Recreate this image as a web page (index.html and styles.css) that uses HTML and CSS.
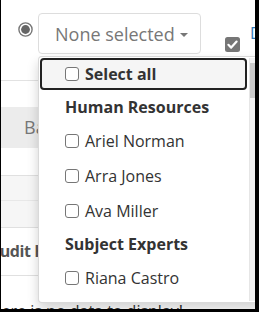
FILE: index.html
```html
<!DOCTYPE html>
<html lang="en">
<head>
    <meta charset="UTF-8">
    <title>Audit filter</title>
    <link rel="stylesheet" href="styles.css">
</head>
<body>
    <div class="frame">
        <div class="toolbar">
            <span class="radio">
                <svg width="15" height="15" viewBox="0 0 15 15"><circle cx="7.5" cy="7.5" r="6.6" fill="#fff" stroke="#777" stroke-width="1.4"/><circle cx="7.5" cy="7.5" r="4.4" fill="#666"/></svg>
            </span>

            <div class="multiselect">
                <button class="ms-button">None selected <span class="caret"></span></button>

                <div class="ms-menu">
                    <ul class="ms-list">
                        <li class="ms-item ms-all"><span class="cb"></span>Select all</li>
                        <li class="ms-group">Human Resources</li>
                        <li class="ms-item"><span class="cb"></span>Ariel Norman</li>
                        <li class="ms-item"><span class="cb"></span>Arra Jones</li>
                        <li class="ms-item"><span class="cb"></span>Ava Miller</li>
                        <li class="ms-group">Subject Experts</li>
                        <li class="ms-item"><span class="cb"></span>Riana Castro</li>
                    </ul>
                    <div class="ms-scroll"><div class="ms-thumb"></div></div>
                </div>
            </div>

            <span class="check-on">
                <svg width="15" height="15" viewBox="0 0 15 15"><rect x="0" y="0" width="15" height="15" rx="2.5" fill="#767676"/><path d="M3.4 7.8 L6.2 10.6 L11.6 4.6" fill="none" stroke="#fff" stroke-width="2.2" stroke-linecap="round" stroke-linejoin="round"/></svg>
            </span>
            <a class="link" href="#">Download</a>
        </div>

        <div class="grid">
            <div class="grid-head">Basic</div>
            <div class="grid-row"></div>
            <div class="grid-row grid-alt"></div>
            <div class="grid-row grid-alt grid-alt-last"></div>
            <div class="grid-title">Audit History</div>
            <div class="grid-empty">There is no data to display!</div>
        </div>
    </div>
</body>
</html>
```

FILE: styles.css
```css
body {
    margin: 0;
    font-family: 'Open Sans', 'Liberation Sans', sans-serif;
    background: #fff;
    color: #333;
}

.frame {
    position: relative;
    width: 259px;
    height: 312px;
    box-sizing: border-box;
    border-left: 1px solid #000;
    border-right: 4px solid #000;
    border-bottom: 3px solid #000;
    overflow: hidden;
    background: #fff;
}

.toolbar {
    display: flex;
    align-items: flex-start;
    height: 67px;
    padding-top: 13px;
    border-bottom: 1px solid #e2e2e2;
}

.radio {
    flex-shrink: 0;
    width: 15px;
    height: 15px;
    margin: 9px 0 0 17px;
}

.radio svg,
.check-on svg {
    display: block;
}

.multiselect {
    position: relative;
    flex-shrink: 0;
    margin-left: 5px;
}

.ms-button {
    display: flex;
    align-items: center;
    width: 163px;
    height: 41px;
    padding: 0 0 0 16px;
    box-sizing: border-box;
    background: #fff;
    border: 1px solid #ddd;
    border-radius: 4px;
    font-family: 'Open Sans', 'Liberation Sans', sans-serif;
    font-size: 18px;
    color: #777;
    white-space: nowrap;
}

.caret {
    display: inline-block;
    width: 0;
    height: 0;
    margin-left: 5px;
    margin-top: 2px;
    border-top: 4px solid #777;
    border-left: 4px solid transparent;
    border-right: 4px solid transparent;
}

.ms-menu {
    position: absolute;
    top: 43px;
    left: 0;
    z-index: 10;
    display: flex;
    gap: 2px;
    width: 227px;
    height: 247px;
    padding: 1px;
    box-sizing: border-box;
    background: #fff;
    border: 1px solid rgba(0, 0, 0, .15);
    border-radius: 4px;
    box-shadow: 0 6px 12px rgba(0, 0, 0, .175);
}

.ms-list {
    list-style: none;
    margin: 0;
    padding: 0;
    width: 207px;
    flex-shrink: 0;
}

.ms-item,
.ms-group {
    display: flex;
    align-items: center;
    padding-left: 25px;
    font-size: 16px;
    white-space: nowrap;
}

.ms-item {
    height: 35px;
    color: #333;
}

.ms-group {
    height: 32px;
    font-weight: bold;
    color: #333;
}

.ms-all {
    height: 32px;
    box-sizing: border-box;
    padding-left: 23px;
    border: 2px solid #222;
    border-radius: 4px;
    background: #f5f5f5;
    font-weight: bold;
}

.ms-all + .ms-group {
    height: 33px;
}

.cb {
    flex-shrink: 0;
    width: 14px;
    height: 14px;
    margin-right: 6px;
    box-sizing: border-box;
    border: 1.5px solid #767676;
    border-radius: 3px;
    background: #fff;
}

.ms-scroll {
    flex-shrink: 0;
    width: 15px;
    background: #f1f1f1;
    border-left: 1px solid #e6e6e6;
}

.ms-thumb {
    height: 35px;
    margin-top: 5px;
    background: #c9c9c9;
}

.check-on {
    flex-shrink: 0;
    width: 15px;
    height: 15px;
    margin: 24px 0 0 24px;
}

.link {
    flex-shrink: 0;
    margin: 9px 0 0 10px;
    font-size: 16px;
    color: #337ab7;
    text-decoration: none;
    white-space: nowrap;
}

.grid {
    margin-top: 26px;
}

.grid-head {
    height: 41px;
    line-height: 41px;
    padding-left: 23px;
    background: #ececec;
    font-size: 18px;
    color: #777;
}

.grid-row {
    height: 27px;
    border-bottom: 1px solid #e0e0e0;
}

.grid-alt {
    height: 24px;
    background: #f6f6f6;
    border-bottom-color: #e8e8e8;
}

.grid-alt-last {
    height: 26px;
    border-bottom-color: #e0e0e0;
}

.grid-title {
    height: 47px;
    line-height: 47px;
    margin-left: -12px;
    border-bottom: 1px solid #e0e0e0;
    font-size: 16px;
    font-weight: bold;
    letter-spacing: -0.4px;
    color: #555;
    white-space: nowrap;
}

.grid-empty {
    margin-left: -18px;
    padding-top: 24px;
    line-height: 22px;
    font-size: 16px;
    color: #333;
    white-space: nowrap;
}
```
